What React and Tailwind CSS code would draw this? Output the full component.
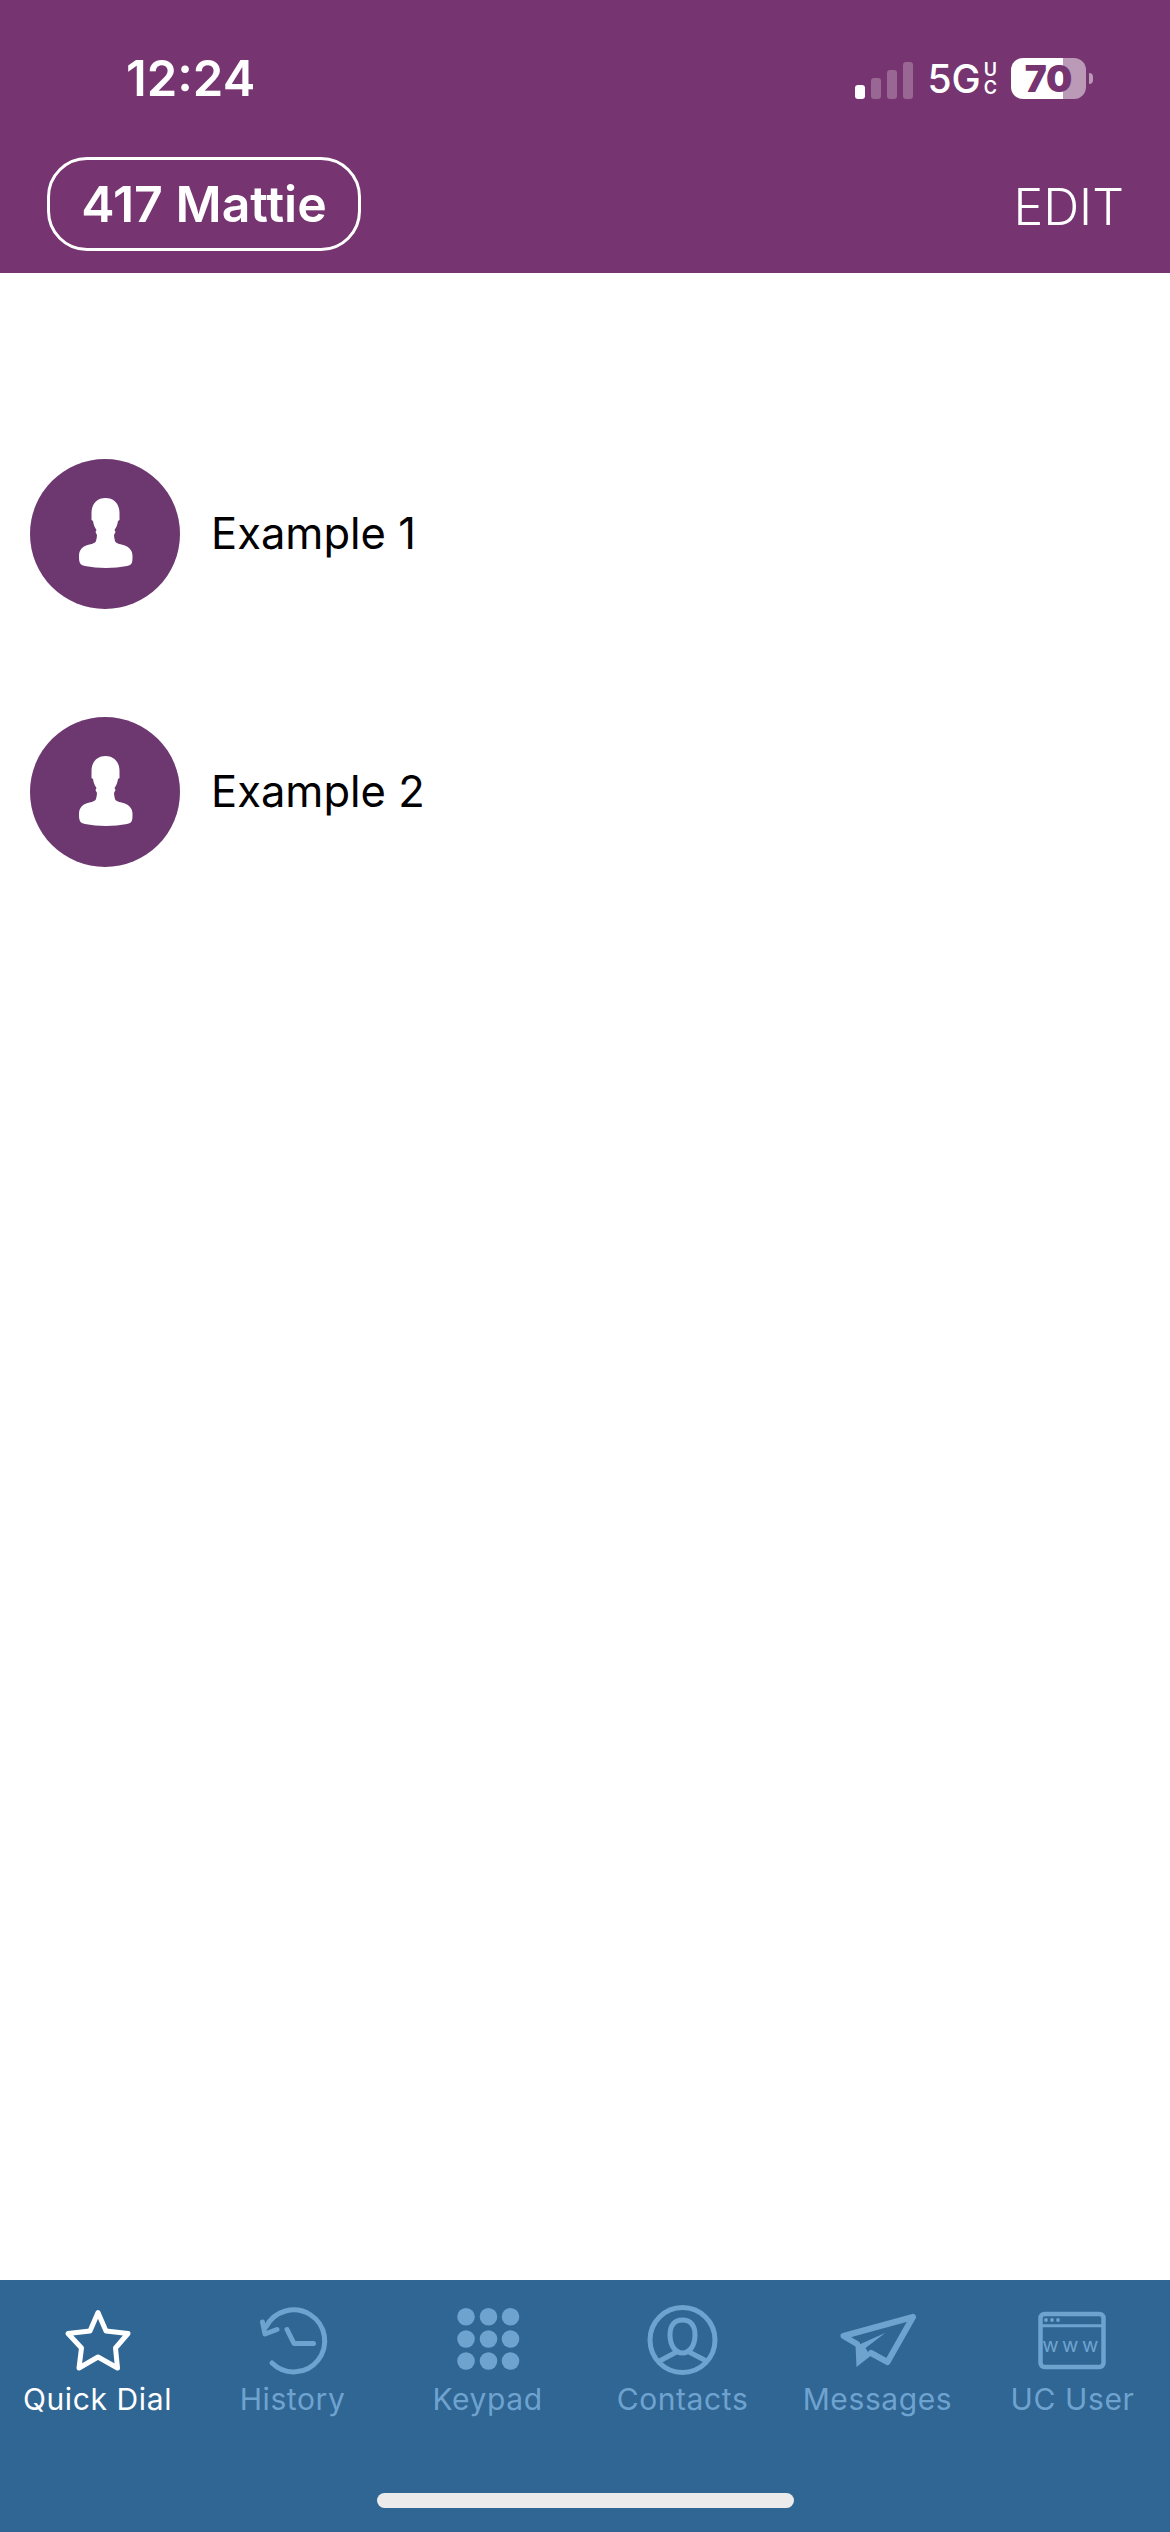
import React from "react";

const contacts = ["Example 1", "Example 2"];

function PersonIcon() {
  return (
    <svg viewBox="0 0 150 150" className="w-[150px] h-[150px]">
      <path
        fill="#fff"
        d="M75.500 39C67 39 61.500 45 61.500 54L61.500 61L63 62C63.500 66 65 69 66.500 71L65.500 73L67 76C67 78 66.500 80 66 82C65 85 60 85 55 87C51 89 49 92 49 97C49 104 50 106 55 107C68 109.500 84 109.500 97 107C102 106 102.500 104 102.500 97C102.500 92 100 89 96 87C91 85 86 85 85 82C84.500 80 84 78 84 76L85.500 73L84.500 71C86 69 87.500 66 88 62L89.500 61L89.500 54C89.500 45 84 39 75.500 39Z"
      />
    </svg>
  );
}

function StarIcon() {
  return (
    <svg viewBox="0 0 72 72" className="w-[72px] h-[72px] overflow-visible" fill="none" stroke="#fff" strokeWidth="5" strokeLinejoin="round">
      <path d="M36 7.500L44 26L66 28.500L53.500 43L55.500 63L36 52L17 63L19.500 43L6 28.500L28 26Z" />
    </svg>
  );
}

function HistoryIcon() {
  return (
    <svg viewBox="0 0 72 72" className="w-[72px] h-[72px] overflow-visible" fill="none" stroke="#6fa3cf" strokeWidth="5" strokeLinecap="round" strokeLinejoin="round">
      <path d="M15 58A31 31 0 1 0 9 22" />
      <path d="M5.500 17L8 29L20 24.500" />
      <path d="M30 24.500L37 38.500L56.500 38.500" />
    </svg>
  );
}

function KeypadIcon() {
  const xs = [14, 36.5, 58.5];
  const ys = [11.7, 34, 56];
  return (
    <svg viewBox="0 0 72 72" className="w-[72px] h-[72px] overflow-visible" fill="#6fa3cf">
      {ys.map((y) => xs.map((x) => <circle key={x + "-" + y} cx={x} cy={y} r="8.800" />))}
    </svg>
  );
}

function ContactsIcon() {
  return (
    <svg viewBox="0 0 72 72" className="w-[72px] h-[72px] overflow-visible" fill="none" stroke="#6fa3cf" strokeWidth="5" strokeLinecap="round">
      <circle cx="35.500" cy="35" r="32.500" />
      <path d="M35.500 15C27 15 23 21 23 30C23 40 28 48 35.500 48C43 48 48 40 48 30C48 21 44 15 35.500 15Z" />
      <path d="M28.500 47.500L13.500 55.500M43 47.500L58.500 55.500" />
    </svg>
  );
}

function MessagesIcon() {
  return (
    <svg viewBox="0 0 72 72" className="w-[72px] h-[72px] overflow-visible" fill="none" stroke="#6fa3cf" strokeWidth="6" strokeLinejoin="round" strokeLinecap="round">
      <path d="M71 12L1.500 31L15 39M29 48L45.500 57L71 12" />
      <path fill="#6fa3cf" stroke="none" d="M13.500 40L14.500 62L28.500 51L23.500 43L43.500 27.700L18.500 39Z" />
    </svg>
  );
}

function BrowserIcon() {
  return (
    <svg viewBox="0 0 72 72" className="w-[72px] h-[72px] overflow-visible" fill="none" stroke="#6fa3cf" strokeWidth="4.500">
      <rect x="3.500" y="9" width="63" height="53" rx="4" />
      <path d="M3.500 20.700L66.500 20.700" strokeWidth="3" />
      <g fill="#6fa3cf" stroke="none">
        <circle cx="9" cy="15" r="1.900" />
        <circle cx="15" cy="15" r="1.900" />
        <circle cx="21" cy="15" r="1.900" />
        <text x="35" y="47" textAnchor="middle" fontFamily="Inter, sans-serif" fontSize="20" letterSpacing="3.500">
          www
        </text>
      </g>
    </svg>
  );
}

const tabs = [
  { label: "Quick Dial", icon: <StarIcon />, active: true },
  { label: "History", icon: <HistoryIcon /> },
  { label: "Keypad", icon: <KeypadIcon /> },
  { label: "Contacts", icon: <ContactsIcon /> },
  { label: "Messages", icon: <MessagesIcon /> },
  { label: "UC User", icon: <BrowserIcon /> },
];

function StatusBar() {
  return (
    <div className="h-[157px] flex items-center justify-between pl-[126px] pr-[77px]">
      <span className="text-[49px] leading-none font-semibold text-white">12:24</span>
      <div className="flex items-center">
        {/* signal */}
        <div className="flex items-end gap-[6px] h-[37px] mt-[3px]">
          <div className="w-[10px] h-[14px] rounded-[3px] bg-white" />
          <div className="w-[10px] h-[21px] rounded-[3px] bg-white/25" />
          <div className="w-[10px] h-[29px] rounded-[3px] bg-white/25" />
          <div className="w-[10px] h-[37px] rounded-[3px] bg-white/25" />
        </div>
        <span className="ml-[14px] text-[39px] leading-none font-medium text-white">5G</span>
        <div className="ml-[3px] flex flex-col items-center text-[18px] leading-[18px] font-semibold text-white">
          <span>U</span>
          <span>C</span>
        </div>
        {/* battery */}
        <div className="ml-[14px] w-[75px] h-[41px] rounded-[12px] flex items-center justify-center bg-[linear-gradient(to_right,#fff_70%,rgba(255,255,255,0.5)_70%)] text-[37px] leading-none font-black text-[#763470]">
          70
        </div>
        <div className="ml-[3px] w-[4px] h-[11px] rounded-r-full bg-white/50" />
      </div>
    </div>
  );
}

export default function App() {
  return (
    <div className="w-[1170px] h-[2532px] flex flex-col bg-white font-['Inter',sans-serif]">
      <div className="h-[273px] bg-[#763470]">
        <StatusBar />
        <div className="flex items-center justify-between pl-[47px] pr-[46px]">
          <div className="w-[314px] h-[94px] flex items-center justify-center rounded-[40px] border-[3px] border-white text-[50px] leading-none font-semibold text-white">
            417 Mattie
          </div>
          <span className="mt-[5px] text-[50px] leading-none font-light text-white">EDIT</span>
        </div>
      </div>

      <div className="flex-1 flex flex-col gap-[108px] pt-[186px] pl-[30px]">
        {contacts.map((name) => (
          <div key={name} className="flex items-center gap-[31px]">
            <div className="w-[150px] h-[150px] rounded-full bg-[#6d3870]">
              <PersonIcon />
            </div>
            <span className="text-[43.500px] leading-none text-black">{name}</span>
          </div>
        ))}
      </div>

      <div className="h-[252px] bg-[#2f6694] flex flex-col">
        <div className="grid grid-cols-6 pt-[25px]">
          {tabs.map((tab) => (
            <div key={tab.label} className="flex flex-col items-center">
              {tab.icon}
              <span
                className={
                  "mt-[2px] text-[30px] leading-[40px] tracking-[0.6px] whitespace-nowrap " +
                  (tab.active ? "text-white" : "text-[#6fa3cf]")
                }
              >
                {tab.label}
              </span>
            </div>
          ))}
        </div>
        <div className="mt-auto mb-[24px] mx-auto w-[417px] h-[15px] rounded-full bg-[#ebebeb]" />
      </div>
    </div>
  );
}
